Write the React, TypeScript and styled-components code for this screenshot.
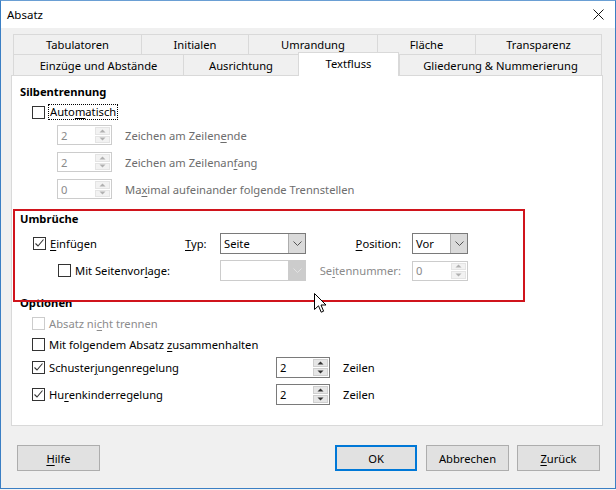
import styled, { createGlobalStyle } from "styled-components";

const GlobalStyle = createGlobalStyle`
  html, body {
    margin: 0;
    padding: 0;
    background: #f4f4f4;
  }
  * {
    box-sizing: border-box;
  }
`;

const rowOne = [
  { label: "Tabulatoren", width: 128 },
  { label: "Initialen", width: 107 },
  { label: "Umrandung", width: 129 },
  { label: "Fläche", width: 98 },
  { label: "Transparenz", width: 127 },
];

const rowTwo = [
  { label: "Einzüge und Abstände", width: 170 },
  { label: "Ausrichtung", width: 115 },
  { label: "Textfluss", width: 101, active: true },
  { label: "Gliederung & Nummerierung", width: 203 },
];

const Check = ({ checked, disabled }: { checked?: boolean; disabled?: boolean }) => (
  <Box $disabled={disabled}>
    {checked && (
      <svg width="11" height="11" viewBox="0 0 11 11">
        <polyline points="1.5,5.5 4,8 9.5,1.5" fill="none" stroke="#333" strokeWidth="1.1" />
      </svg>
    )}
  </Box>
);

const Spin = ({ value, width, disabled }: { value: string; width: number; disabled?: boolean }) => (
  <SpinBox $w={width} $disabled={disabled}>
    <FieldValue $disabled={disabled}>{value}</FieldValue>
    <SpinButtons>
      <SpinArrow $disabled={disabled}>
        <svg width="7" height="4" viewBox="0 0 7 4">
          <polygon points="0.5,3.5 3.5,0.5 6.5,3.5" fill={disabled ? "#b0b0b0" : "#333"} />
        </svg>
      </SpinArrow>
      <SpinArrow $disabled={disabled}>
        <svg width="7" height="4" viewBox="0 0 7 4">
          <polygon points="0.5,0.5 6.5,0.5 3.5,3.5" fill={disabled ? "#b0b0b0" : "#333"} />
        </svg>
      </SpinArrow>
    </SpinButtons>
  </SpinBox>
);

const Dropdown = ({ value, width, disabled }: { value: string; width: number; disabled?: boolean }) => (
  <SelectBox $w={width} $disabled={disabled}>
    <FieldValue>{value}</FieldValue>
    <SelectButton $disabled={disabled}>
      <svg width="9" height="5" viewBox="0 0 9 5">
        <polyline points="0.5,0.5 4.5,4.5 8.5,0.5" fill="none" stroke={disabled ? "#e2e2e2" : "#555"} strokeWidth="1" />
      </svg>
    </SelectButton>
  </SelectBox>
);

const App = (): JSX.Element => {
  return (
    <>
      <GlobalStyle />
      <Window>
        <TitleBar>
          <span>Absatz</span>
          <svg width="11" height="11" viewBox="0 0 11 11">
            <line x1="0.5" y1="0.5" x2="10.5" y2="10.5" stroke="#111" strokeWidth="1" />
            <line x1="10.5" y1="0.5" x2="0.5" y2="10.5" stroke="#111" strokeWidth="1" />
          </svg>
        </TitleBar>

        <Body>
          <TabStrip>
            <TabRow $h={20}>
              {rowOne.map((t, i) => (
                <Tab key={t.label} $w={t.width} $last={i === rowOne.length - 1}>
                  {t.label}
                </Tab>
              ))}
            </TabRow>
            <TabRow $h={21}>
              {rowTwo.map((t, i) => (
                <Tab key={t.label} $w={t.width} $last={i === rowTwo.length - 1} $active={t.active}>
                  {t.label}
                </Tab>
              ))}
            </TabRow>
          </TabStrip>

          <Panel>
            <Heading $top={0}>Silbentrennung</Heading>
            <CheckRow $indent={12}>
              <Check />
              <Focus>
                Auto<U>m</U>atisch
              </Focus>
            </CheckRow>
            <SpinRow $top={3}>
              <Spin value="2" width={55} disabled />
              <Muted>
                Zeichen am Zeilen<U>e</U>nde
              </Muted>
            </SpinRow>
            <SpinRow $top={7}>
              <Spin value="2" width={55} disabled />
              <Muted>
                Zeichen am Zeilenan<U>f</U>ang
              </Muted>
            </SpinRow>
            <SpinRow $top={7}>
              <Spin value="0" width={55} disabled />
              <Muted>
                Ma<U>x</U>imal aufeinander folgende Trennstellen
              </Muted>
            </SpinRow>

            <Heading $top={10}>Umbrüche</Heading>
            <BreakGrid>
              <CheckRow $indent={0}>
                <Check checked />
                <span>
                  <U>E</U>infügen
                </span>
              </CheckRow>
              <span>
                <U>T</U>yp:
              </span>
              <Dropdown value="Seite" width={86} />
              <FieldLabel>
                <U>P</U>osition:
              </FieldLabel>
              <Dropdown value="Vor" width={56} />

              <CheckRow $indent={25}>
                <Check />
                <span>
                  Mit Seitenvor<U>l</U>age:
                </span>
              </CheckRow>
              <span />
              <Dropdown value="" width={86} disabled />
              <FieldLabel $muted>
                Se<U>i</U>tennummer:
              </FieldLabel>
              <Spin value="0" width={56} disabled />
            </BreakGrid>

            <Heading $top={12}>Optionen</Heading>
            <CheckRow $indent={12}>
              <Check disabled />
              <Muted $light>
                Absatz ni<U>c</U>ht trennen
              </Muted>
            </CheckRow>
            <CheckRow $indent={12} $top={1}>
              <Check />
              <span>
                Mit folgendem Absatz <U>z</U>usammenhalten
              </span>
            </CheckRow>
            <OptionRow $top={3}>
              <CheckRow $indent={0}>
                <Check checked />
                <span>
                  Schuster<U>j</U>ungenregelung
                </span>
              </CheckRow>
              <Spin value="2" width={54} />
              <span>Zeilen</span>
            </OptionRow>
            <OptionRow $top={6}>
              <CheckRow $indent={0}>
                <Check checked />
                <span>
                  Hu<U>r</U>enkinderregelung
                </span>
              </CheckRow>
              <Spin value="2" width={54} />
              <span>Zeilen</span>
            </OptionRow>
          </Panel>
        </Body>

        <ButtonBar>
          <Button>
            <U>H</U>ilfe
          </Button>
          <Spacer />
          <Button $default $w={82}>
            OK
          </Button>
          <Button>Abbrechen</Button>
          <Button>
            <U>Z</U>urück
          </Button>
        </ButtonBar>

        <Highlight />
        <Cursor width="13" height="21" viewBox="0 0 13 21">
          <path
            d="M0.5,0.5 L0.5,16.5 L4.5,12.8 L7.2,19.2 L9.6,18.2 L7,12 L12,12 Z"
            fill="#fff"
            stroke="#000"
            strokeWidth="1"
            strokeLinejoin="miter"
          />
        </Cursor>
      </Window>
    </>
  );
};

const Window = styled.div`
  position: relative;
  width: 616px;
  height: 489px;
  border: 1px solid #3b7fc4;
  border-top-color: #6a9fd4;
  background: #f0f0f0;
  display: flex;
  flex-direction: column;
  font-family: "Noto Sans", "Open Sans", sans-serif;
  font-size: 11.2px;
  color: #000;
`;

const TitleBar = styled.div`
  height: 27px;
  background: #ffffff;
  display: flex;
  align-items: center;
  justify-content: space-between;
  padding: 0 11px 1px 6px;
  font-size: 11.5px;
`;

const Body = styled.div`
  display: flex;
  flex-direction: column;
  padding: 6px 12px 0 10px;
`;

const TabStrip = styled.div`
  display: flex;
  flex-direction: column;
  margin: 0 1px 0 2px;
`;

const TabRow = styled.div<{ $h: number }>`
  display: flex;
  height: ${(p) => p.$h}px;
`;

const Tab = styled.div<{ $w: number; $last?: boolean; $active?: boolean }>`
  width: ${(p) => p.$w}px;
  flex-shrink: 0;
  display: flex;
  align-items: center;
  justify-content: center;
  border-top: 1px solid #d9d9d9;
  border-left: 1px solid #d9d9d9;
  border-right: ${(p) => (p.$last || p.$active ? "1px solid #d9d9d9" : "none")};
  background: ${(p) => (p.$active ? "#ffffff" : "#f0f0f0")};
  white-space: nowrap;
  ${(p) =>
    p.$active &&
    `
    position: relative;
    z-index: 1;
    margin-top: -2px;
    height: 24px;
    padding-bottom: 3px;
  `}
`;

const Panel = styled.div`
  height: 351px;
  background: #ffffff;
  border: 1px solid #d9d9d9;
  display: flex;
  flex-direction: column;
  padding: 6px 8px 0 8px;
`;

const Heading = styled.div<{ $top: number }>`
  height: 20px;
  line-height: 20px;
  font-weight: 700;
  margin-top: ${(p) => p.$top}px;
`;

const CheckRow = styled.div<{ $indent: number; $top?: number }>`
  display: flex;
  align-items: center;
  gap: 4px;
  height: 20px;
  padding-left: ${(p) => p.$indent}px;
  margin-top: ${(p) => p.$top ?? 0}px;
  white-space: nowrap;
`;

const Box = styled.span<{ $disabled?: boolean }>`
  width: 13px;
  height: 13px;
  flex-shrink: 0;
  border: 1px solid ${(p) => (p.$disabled ? "#cccccc" : "#333333")};
  background: #ffffff;
  display: inline-flex;
  align-items: center;
  justify-content: center;
`;

const Focus = styled.span`
  border: 1px dotted #000;
  padding: 0 1px;
  line-height: 14px;
  margin-left: -1px;
`;

const U = styled.span`
  text-decoration: underline;
  text-underline-offset: 2px;
`;

const Muted = styled.span<{ $light?: boolean }>`
  color: ${(p) => (p.$light ? "#8c8c8c" : "#6d6d6d")};
`;

const SpinRow = styled.div<{ $top: number }>`
  display: flex;
  align-items: center;
  gap: 13px;
  height: 20px;
  padding-left: 37px;
  margin-top: ${(p) => p.$top}px;
`;

const SpinBox = styled.div<{ $w: number; $disabled?: boolean }>`
  width: ${(p) => p.$w}px;
  height: ${(p) => (p.$disabled ? 20 : 21)}px;
  flex-shrink: 0;
  display: flex;
  border: 1px solid ${(p) => (p.$disabled ? "#cccccc" : "#7a7a7a")};
  background: #ffffff;
`;

const FieldValue = styled.div<{ $disabled?: boolean }>`
  flex: 1;
  display: flex;
  align-items: center;
  padding-left: 3px;
  color: ${(p) => (p.$disabled ? "#8a8a8a" : "#000")};
`;

const SpinButtons = styled.div`
  width: 16px;
  display: flex;
  flex-direction: column;
  gap: 1px;
  padding: 1px 1px 1px 0;
`;

const SpinArrow = styled.div<{ $disabled?: boolean }>`
  flex: 1;
  display: flex;
  align-items: center;
  justify-content: center;
  background: ${(p) => (p.$disabled ? "#f2f2f2" : "#e6e6e6")};
  border: 1px solid ${(p) => (p.$disabled ? "#e4e4e4" : "#cfcfcf")};
`;

const BreakGrid = styled.div`
  display: grid;
  grid-template-columns: 152px 35px 86px 106px 56px;
  grid-auto-rows: 21px;
  row-gap: 6px;
  align-items: center;
  padding-left: 13px;
  margin-top: 4px;
`;

const FieldLabel = styled.span<{ $muted?: boolean }>`
  text-align: right;
  padding-right: 11px;
  color: ${(p) => (p.$muted ? "#8a8a8a" : "#000")};
`;

const SelectBox = styled.div<{ $w: number; $disabled?: boolean }>`
  width: ${(p) => p.$w}px;
  height: 21px;
  display: flex;
  border: 1px solid ${(p) => (p.$disabled ? "#cccccc" : "#7a7a7a")};
  background: #ffffff;
`;

const SelectButton = styled.div<{ $disabled?: boolean }>`
  width: 17px;
  display: flex;
  align-items: center;
  justify-content: center;
  background: ${(p) => (p.$disabled ? "#cccccc" : "#dadada")};
  border-left: 1px solid ${(p) => (p.$disabled ? "#cccccc" : "#adadad")};
`;

const OptionRow = styled.div<{ $top: number }>`
  display: grid;
  grid-template-columns: 231px 54px auto;
  column-gap: 13px;
  align-items: center;
  height: 21px;
  padding-left: 12px;
  margin-top: ${(p) => p.$top}px;
`;

const ButtonBar = styled.div`
  display: flex;
  gap: 8px;
  margin-top: 19px;
  padding: 0 15px 0 16px;
`;

const Spacer = styled.div`
  flex: 1;
`;

const Button = styled.div<{ $default?: boolean; $w?: number }>`
  width: ${(p) => p.$w ?? 83}px;
  height: 26px;
  display: flex;
  align-items: center;
  justify-content: center;
  background: #e1e1e1;
  border: ${(p) => (p.$default ? "2px solid #0078d7" : "1px solid #adadad")};
  margin-right: ${(p) => (p.$default ? 1 : 0)}px;
`;

const Highlight = styled.div`
  position: absolute;
  left: 12px;
  top: 208px;
  width: 512px;
  height: 93px;
  border: 2px solid #d0141c;
  pointer-events: none;
`;

const Cursor = styled.svg`
  position: absolute;
  left: 313px;
  top: 292px;
`;

export default App;
